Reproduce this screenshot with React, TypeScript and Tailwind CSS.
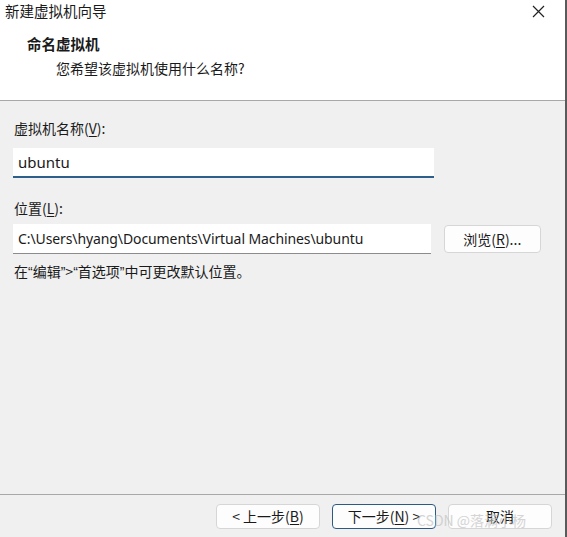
import React from 'react'

const cjk = { fontFamily: '"Noto Sans CJK SC", "Noto Sans", sans-serif' }
const latin = { fontFamily: '"Noto Sans", "Noto Sans CJK SC", sans-serif' }

function Btn({ children, focused, className = '' }: { children: React.ReactNode; focused?: boolean; className?: string }) {
  return (
    <button
      className={`h-[25px] w-[104px] rounded-[4px] bg-[#fdfdfd] text-[14px] text-[#1a1a1a] flex items-center justify-center border ${focused ? 'border-[#2c5a85] border-[1.5px]' : 'border-[#d6d6d6]'} ${className}`}
      style={cjk}
    >
      {children}
    </button>
  )
}

const Q = ({ c }: { c: string }) => <span style={{ fontFamily: '"Liberation Sans", sans-serif' }}>{c}</span>

export default function App() {
  return (
    <div className="relative w-[567px] h-[537px] bg-[#f0f0f0] text-[#1a1a1a] flex flex-col overflow-hidden border-r-2 border-[#5a5a5a]" style={cjk}>
      {/* header */}
      <div className="bg-white h-[101px] border-b border-[#a8a8a8] flex flex-col">
        <div className="flex items-center justify-between h-[22px] pl-[5px] pr-[20px]">
          <span className="text-[14.5px] leading-none">新建虚拟机向导</span>
          <svg width="13" height="13" viewBox="0 0 13 13">
            <path d="M1 1L12 12M12 1L1 12" stroke="#222" strokeWidth="1.2" fill="none" />
          </svg>
        </div>
        <div className="pl-[27px] pt-[15px] text-[14.5px] font-bold leading-none">命名虚拟机</div>
        <div className="pl-[56px] pt-[9px] text-[14px] leading-none">您希望该虚拟机使用什么名称?</div>
      </div>

      {/* body */}
      <div className="flex-1 pl-[13px] pr-[24px] pt-[20px] flex flex-col">
        <div className="pl-[1px] text-[14px] leading-none h-[17px]">
          虚拟机名称(<span className="underline underline-offset-2">V</span>):
        </div>
        <div className="mt-[10px] w-[421px] h-[30px] bg-white border-b-2 border-[#2e5f8a] flex items-center pl-[5px] text-[15px]" style={latin}>
          ubuntu
        </div>
        <div className="mt-[23px] pl-[1px] text-[14px] leading-none h-[17px]">
          位置(<span className="underline underline-offset-2">L</span>):
        </div>
        <div className="mt-[6px] flex items-center gap-[13px]">
          <div className="w-[420px] h-[30px] bg-white border-b border-[#8c8c8c] flex items-center pl-[5px] text-[14px] tracking-[-0.1px] whitespace-nowrap" style={latin}>
            C:\Users\hyang\Documents\Virtual Machines\ubuntu
          </div>
          <button className="h-[28px] w-[98px] rounded-[4px] bg-[#fdfdfd] border border-[#d6d6d6] text-[14px] flex items-center justify-center" style={cjk}>
            浏览(<span className="underline underline-offset-2">R</span>)...
          </button>
        </div>
        <div className="mt-[10px] pl-[1px] text-[14px] leading-none">
          在<Q c="“" />编辑<Q c="”" />&gt;<Q c="“" />首选项<Q c="”" />中可更改默认位置。
        </div>
      </div>

      {/* footer */}
      <div className="h-[43px] border-t border-[#a8a8a8] flex items-center justify-end gap-[12px] pr-[13px] pt-[1px]">
        <Btn>&lt; 上一步(<span className="underline underline-offset-2">B</span>)</Btn>
        <Btn focused>下一步(<span className="underline underline-offset-2">N</span>) &gt;</Btn>
        <Btn>取消</Btn>
      </div>

      {/* watermark */}
      <div className="absolute left-[417px] top-[510px] text-[14px] text-[#c4c4c4] opacity-70 pointer-events-none whitespace-nowrap" style={cjk}>
        CSDN @落满小杨
      </div>
    </div>
  )
}
